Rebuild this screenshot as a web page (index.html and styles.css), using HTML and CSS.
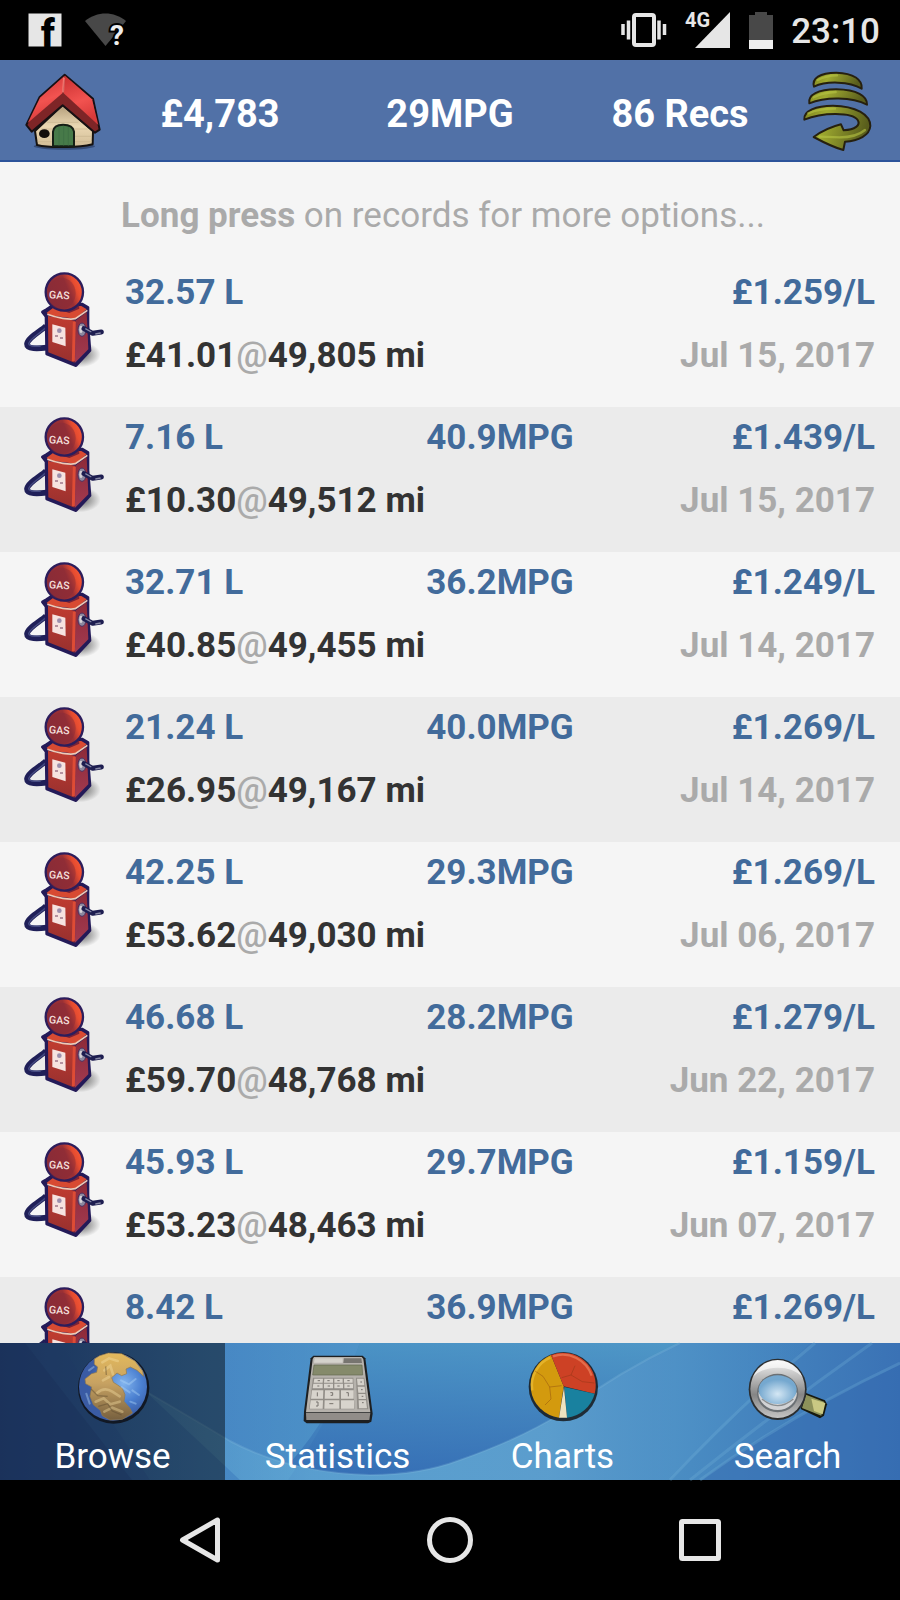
FILE: index.html
```
<!DOCTYPE html>
<html lang="en">
<head>
    <meta charset="UTF-8">
    <meta name="viewport" content="width=device-width, initial-scale=1.0">
    <title>Fuel Records</title>
    <link rel="stylesheet" href="styles.css">
</head>
<body>

    <!-- Shared pump icon -->
    <svg class="defs" width="0" height="0" aria-hidden="true">
        <defs>
            <linearGradient id="pump-face" x1="0" y1="0" x2="0" y2="1">
                <stop offset="0" stop-color="#c03c30"/>
                <stop offset="1" stop-color="#98302f"/>
            </linearGradient>
            <linearGradient id="pump-side" x1="0" y1="0" x2="0" y2="1">
                <stop offset="0" stop-color="#8d2a38"/>
                <stop offset="1" stop-color="#a33a50"/>
            </linearGradient>
            <linearGradient id="pump-globe" x1="0" y1="0.7" x2="1" y2="0.3">
                <stop offset="0" stop-color="#8a2c38"/>
                <stop offset="0.6" stop-color="#9a3035"/>
                <stop offset="0.8" stop-color="#e64c30"/>
                <stop offset="1" stop-color="#f65a38"/>
            </linearGradient>
            <radialGradient id="pump-shadow">
                <stop offset="0" stop-color="#222" stop-opacity="0.7"/>
                <stop offset="1" stop-color="#222" stop-opacity="0"/>
            </radialGradient>
        </defs>
        <symbol id="pump" viewBox="12 20 240 294">
            <ellipse cx="180" cy="268" rx="62" ry="38" fill="url(#pump-shadow)"/>
            <path d="M78 182 C62 198 24 216 21 236 C21 252 54 250 80 247" fill="none" stroke="#1f1f58" stroke-width="17" stroke-linejoin="round"/>
            <path d="M76 188 C60 204 30 220 26 234 C26 244 44 243 62 243" fill="none" stroke="#454b82" stroke-width="4"/>
            <path d="M67 140 L80 132 L98 120 L186 116 L204 126 L204 180 L210 256 L168 301 L80 266 L78 154Z" fill="#241a58" stroke="#241a58" stroke-width="8" stroke-linejoin="round"/>
            <path d="M80 142 L104 124 L184 122 L200 132 L166 160 L86 150Z" fill="#d84a32"/>
            <path d="M84 152 L166 166 L164 292 L85 261Z" fill="url(#pump-face)"/>
            <path d="M166 166 L200 140 L205 252 L165 292Z" fill="url(#pump-side)"/>
            <path d="M163 169 L160 288" stroke="#de4c35" stroke-width="9"/>
            <path d="M82 147 C110 158 150 164 166 160 L202 135" fill="none" stroke="#f0c9b4" stroke-width="5"/>
            <path d="M108 110 L176 110 L178 130 L148 143 L112 132Z" fill="#7b2335"/>
            <circle cx="133" cy="80" r="56" fill="url(#pump-globe)" stroke="#2c1d5c" stroke-width="7"/>
            <ellipse cx="124" cy="84" rx="43" ry="47" fill="#842a38" opacity="0.45"/>
            <text x="86" y="99" class="pump-sign" transform="rotate(3 86 99)">GAS</text>
            <path d="M97 177 L136 187 L137 243 L97 230Z" fill="#f6e3e0"/>
            <circle cx="118" cy="196" r="7" fill="#9c8fac"/>
            <path d="M105 212h9M120 218h9" stroke="#b492a0" stroke-width="6"/>
            <ellipse cx="186" cy="193" rx="12" ry="20" fill="#8d8aa0" stroke="#4a2f60" stroke-width="3"/>
            <ellipse cx="183" cy="192" rx="5" ry="11" fill="#d7d2d6"/>
            <path d="M192 190 L218 204 L244 200" fill="none" stroke="#1d1d50" stroke-width="15" stroke-linecap="round" stroke-linejoin="round"/>
            <path d="M196 190 L214 200M226 206 L242 203" stroke="#8688a5" stroke-width="4"/>
        </symbol>
    </svg>

    <!-- Status bar -->
    <div class="status-bar">
        <div class="status-group status-left">
            <svg width="34" height="34" viewBox="0 0 34 34" aria-hidden="true">
                <rect x="0.5" y="0.5" width="33" height="33" fill="#e6e6e6"/>
                <text x="13" y="34" class="fb-letter">f</text>
            </svg>
            <svg width="42" height="34" viewBox="0 0 42 34" aria-hidden="true">
                <path d="M0 8 C12 -2 29 -2 41 8 L20.500 33Z" fill="#484848"/>
                <text x="25" y="32" class="wifi-mark">?</text>
            </svg>
        </div>
        <div class="status-group status-right">
            <svg width="46" height="36" viewBox="0 0 46 36" aria-hidden="true">
                <rect x="13" y="3" width="20" height="30" rx="2" fill="none" stroke="#e6e6e6" stroke-width="4"/>
                <path d="M2 12v11M7.500 8.500v19M38 8.500v19M43.500 12v11" stroke="#e6e6e6" stroke-width="3.500"/>
            </svg>
            <svg width="46" height="36" viewBox="0 0 46 36" aria-hidden="true">
                <path d="M45 0V36H10Z" fill="#e6e6e6"/>
                <text x="0" y="15" class="signal-type">4G</text>
            </svg>
            <svg width="24" height="37" viewBox="0 0 24 37" aria-hidden="true">
                <path d="M0 3H6V0H18V3H24V28H0Z" fill="#484848"/>
                <path d="M0 28H24V37H0Z" fill="#eee"/>
            </svg>
            <span class="clock">23:10</span>
        </div>
    </div>

    <!-- Summary header -->
    <header class="summary">
        <button type="button" class="summary-button" aria-label="Home">
            <svg width="76" height="77" viewBox="74 214 228 231" aria-hidden="true">
                <defs>
                    <linearGradient id="roof" x1="0" y1="0" x2="0.300" y2="1">
                        <stop offset="0" stop-color="#c92f31"/>
                        <stop offset="0.600" stop-color="#f25350"/>
                        <stop offset="1" stop-color="#d83a3a"/>
                    </linearGradient>
                    <linearGradient id="wall" x1="0" y1="0" x2="0" y2="1">
                        <stop offset="0" stop-color="#b29c79"/>
                        <stop offset="0.500" stop-color="#ead7b2"/>
                        <stop offset="1" stop-color="#d2bd96"/>
                    </linearGradient>
                </defs>
                <ellipse cx="192" cy="434" rx="92" ry="10" fill="#1a2747" opacity="0.500"/>
                <path d="M187 310 L278 388 L277 428 Q240 437 190 436 Q140 437 110 430 L104 388Z" fill="url(#wall)" stroke="#171311" stroke-width="6" stroke-linejoin="round"/>
                <path d="M140 362H234M122 382H262M222 404H274M222 420H274M112 420H154" stroke="#c9b48e" stroke-width="2"/>
                <path d="M158 434 V390 Q160 369 188 369 Q218 369 221 390 V434Z" fill="#477a49" stroke="#161f16" stroke-width="6"/>
                <path d="M176 376V432M190 372V432M204 376V432" stroke="#3d6d42" stroke-width="2"/>
                <ellipse cx="132" cy="396" rx="16" ry="13" fill="#130e0c"/>
                <path d="M193 219 L278 291 L298 384 L284 393 L187 311 L94 390 L78 370 L118 286Z" fill="#7e2527" stroke="#171014" stroke-width="6" stroke-linejoin="round"/>
                <path d="M193 222 L119 288 L82 364 L186 275Z" fill="url(#roof)"/>
                <path d="M194 222 L275 293 L294 370 L190 275Z" fill="url(#roof)"/>
                <path d="M191 228 L188 272" stroke="#ff8880" stroke-width="6" opacity="0.700"/>
            </svg>
        </button>
        <div class="summary-stats">
            <span>£4,783</span>
            <span>29MPG</span>
            <span>86 Recs</span>
        </div>
        <button type="button" class="summary-button" aria-label="Sort records">
            <svg width="69" height="80" viewBox="1060 215 207 240" aria-hidden="true">
                <defs>
                    <linearGradient id="coil" x1="0" y1="0" x2="1" y2="0.200">
                        <stop offset="0" stop-color="#7f8420"/>
                        <stop offset="0.350" stop-color="#a0ab30"/>
                        <stop offset="1" stop-color="#595d1c"/>
                    </linearGradient>
                </defs>
                <g fill="url(#coil)" stroke="#26200f" stroke-width="6" stroke-linejoin="round">
                    <path d="M1093 262 C1086 238 1110 220 1160 220 C1212 221 1239 242 1236 268 C1200 246 1130 244 1093 262Z"/>
                    <path d="M1079 312 C1074 286 1106 270 1160 270 C1222 271 1253 290 1252 316 C1208 292 1126 292 1079 312Z"/>
                    <path d="M1064 361 C1060 334 1100 319 1150 319 C1218 320 1262 346 1262 380 C1260 408 1226 425 1186 427 L1181 452 C1150 444 1120 428 1092 413 C1118 394 1146 382 1174 375 L1182 393 C1216 391 1234 378 1224 362 C1208 338 1118 338 1064 361Z"/>
                </g>
                <path d="M1104 242 Q1130 228 1162 228M1092 294 Q1120 279 1158 278M1076 342 Q1110 327 1156 328M1110 412 L1170 414 Q1220 414 1246 392" fill="none" stroke="#b8c444" stroke-width="7" stroke-linecap="round" opacity="0.600"/>
            </svg>
        </button>
    </header>

    <!-- Records -->
    <main class="records">
        <p class="hint"><b>Long press</b> on records for more options...</p>
        <ul class="record-list">
            <li class="record">
                <svg class="record-icon" aria-hidden="true"><use href="#pump"/></svg>
                <div class="record-line fuel"><span>32.57 L</span><span></span><span>£1.259/L</span></div>
                <div class="record-line cost"><span>£41.01<i>@</i>49,805 mi</span><time>Jul 15, 2017</time></div>
            </li>
            <li class="record">
                <svg class="record-icon" aria-hidden="true"><use href="#pump"/></svg>
                <div class="record-line fuel"><span>7.16 L</span><span>40.9MPG</span><span>£1.439/L</span></div>
                <div class="record-line cost"><span>£10.30<i>@</i>49,512 mi</span><time>Jul 15, 2017</time></div>
            </li>
            <li class="record">
                <svg class="record-icon" aria-hidden="true"><use href="#pump"/></svg>
                <div class="record-line fuel"><span>32.71 L</span><span>36.2MPG</span><span>£1.249/L</span></div>
                <div class="record-line cost"><span>£40.85<i>@</i>49,455 mi</span><time>Jul 14, 2017</time></div>
            </li>
            <li class="record">
                <svg class="record-icon" aria-hidden="true"><use href="#pump"/></svg>
                <div class="record-line fuel"><span>21.24 L</span><span>40.0MPG</span><span>£1.269/L</span></div>
                <div class="record-line cost"><span>£26.95<i>@</i>49,167 mi</span><time>Jul 14, 2017</time></div>
            </li>
            <li class="record">
                <svg class="record-icon" aria-hidden="true"><use href="#pump"/></svg>
                <div class="record-line fuel"><span>42.25 L</span><span>29.3MPG</span><span>£1.269/L</span></div>
                <div class="record-line cost"><span>£53.62<i>@</i>49,030 mi</span><time>Jul 06, 2017</time></div>
            </li>
            <li class="record">
                <svg class="record-icon" aria-hidden="true"><use href="#pump"/></svg>
                <div class="record-line fuel"><span>46.68 L</span><span>28.2MPG</span><span>£1.279/L</span></div>
                <div class="record-line cost"><span>£59.70<i>@</i>48,768 mi</span><time>Jun 22, 2017</time></div>
            </li>
            <li class="record">
                <svg class="record-icon" aria-hidden="true"><use href="#pump"/></svg>
                <div class="record-line fuel"><span>45.93 L</span><span>29.7MPG</span><span>£1.159/L</span></div>
                <div class="record-line cost"><span>£53.23<i>@</i>48,463 mi</span><time>Jun 07, 2017</time></div>
            </li>
            <li class="record">
                <svg class="record-icon" aria-hidden="true"><use href="#pump"/></svg>
                <div class="record-line fuel"><span>8.42 L</span><span>36.9MPG</span><span>£1.269/L</span></div>
            </li>
        </ul>
    </main>

    <!-- Tabs -->
    <nav class="tabs">
        <svg class="tabs-background" viewBox="0 0 900 137" preserveAspectRatio="none" aria-hidden="true">
            <defs>
                <linearGradient id="sky" x1="0" y1="0" x2="1" y2="0">
                    <stop offset="0" stop-color="#3562ae"/>
                    <stop offset="0.230" stop-color="#3f7cbf"/>
                    <stop offset="0.400" stop-color="#3f80be"/>
                    <stop offset="0.750" stop-color="#4a8dc3"/>
                    <stop offset="1" stop-color="#3a72b5"/>
                </linearGradient>
                <linearGradient id="beam" x1="0" y1="0" x2="1" y2="0">
                    <stop offset="0" stop-color="#58a0cf" stop-opacity="0"/>
                    <stop offset="1" stop-color="#58a0cf" stop-opacity="0.600"/>
                </linearGradient>
                <linearGradient id="deep" x1="0" y1="1" x2="0" y2="0">
                    <stop offset="0" stop-color="#3268b2" stop-opacity="0.700"/>
                    <stop offset="1" stop-color="#509bc8" stop-opacity="0.700"/>
                </linearGradient>
                <linearGradient id="wave" gradientUnits="userSpaceOnUse" x1="140" y1="0" x2="820" y2="0">
                    <stop offset="0" stop-color="#5ea5d2" stop-opacity="0.300"/>
                    <stop offset="0.250" stop-color="#64abd6" stop-opacity="0.700"/>
                    <stop offset="0.600" stop-color="#5d9fce" stop-opacity="0.900"/>
                    <stop offset="1" stop-color="#4386c1" stop-opacity="0.300"/>
                </linearGradient>
            </defs>
            <rect width="900" height="137" fill="url(#sky)"/>
            <path d="M0 0H25L132 137H0Z" fill="#2b4f98" opacity="0.300"/>
            <path d="M60 0H360Q334 70 288 137H150Z" fill="url(#beam)"/>
            <path d="M360 0Q334 70 290 120Q320 132 370 132Q420 132 460 117Q520 96 562 70Q620 28 680 0Z" fill="url(#deep)"/>
            <path d="M145 48Q200 80 230 98Q290 130 370 132Q420 132 460 117Q520 96 562 70Q620 28 680 0H810L670 137H240Z" fill="url(#wave)"/>
            <path d="M145 48Q200 80 230 98Q290 130 370 132Q420 132 460 117Q520 96 562 70Q620 28 680 0" fill="none" stroke="#86c0df" stroke-width="2" opacity="0.250"/>
            <path d="M900 22Q780 76 702 137H900Z" fill="#3468b0" opacity="0.450"/>
            <path d="M815 0Q740 62 670 137M872 0Q780 65 690 137M900 20Q790 72 700 137" fill="none" stroke="#71afd7" stroke-width="3" opacity="0.300"/>
        </svg>
        <a href="#browse" class="tab active">
            <svg width="76" height="76" viewBox="10 8 228 228" aria-hidden="true">
                <defs>
                    <radialGradient id="globe-sea" cx="0.650" cy="0.450">
                        <stop offset="0" stop-color="#82b4ee"/>
                        <stop offset="0.550" stop-color="#4a7fd0"/>
                        <stop offset="1" stop-color="#3a5ba4"/>
                    </radialGradient>
                    <linearGradient id="globe-land" x1="0" y1="0" x2="0" y2="1">
                        <stop offset="0" stop-color="#e3b95c"/>
                        <stop offset="0.450" stop-color="#c7a262"/>
                        <stop offset="1" stop-color="#77603f"/>
                    </linearGradient>
                </defs>
                <circle cx="126" cy="125" r="107" fill="#111824"/>
                <circle cx="124" cy="121" r="102" fill="url(#globe-sea)"/>
                <path d="M68 38 L84 28 L110 20 L150 22 L190 44 L213 74 L216 90 L196 72 L176 62 L163 68 L165 82 L150 88 L136 80 L120 94 L125 108 L138 116 L152 126 L160 145 L157 165 L175 186 L182 200 L152 219 L115 221 L92 208 L86 192 L65 175 L55 150 L60 122 L42 112 L40 98 L60 82 L75 78 L78 62 L68 54Z" fill="url(#globe-land)" stroke="#94794a" stroke-width="2" stroke-linejoin="round"/>
                <path d="M92 48 L112 36 L138 44M98 72 L116 58 L124 84M94 102 L112 92M76 140 Q98 120 122 136 L144 150M72 166 L96 156 L116 174 L144 166M98 196 L122 184 L152 196" fill="none" stroke="#f5dfa2" stroke-width="8" stroke-linecap="round" opacity="0.400"/>
                <path d="M58 128 L78 148 L108 150M80 180 L108 172 L122 194 L150 206M102 60 L104 86" fill="none" stroke="#5c492e" stroke-width="4" opacity="0.450"/>
                <path d="M148 102 L172 114 L192 98M150 122 L174 138M182 132 L202 146M176 166 L192 172M44 142 L54 172M52 72 L66 62" fill="none" stroke="#b1d6f8" stroke-width="6" stroke-linecap="round" opacity="0.400"/>
            </svg>
            <span>Browse</span>
        </a>
        <a href="#statistics" class="tab">
            <svg width="76" height="76" viewBox="898 56 228 228" aria-hidden="true">
                <path d="M938 76H1086L1094 84L1116 250L1112 274L1102 279H918L909 272L910 244L930 84Z" fill="#1d1f21"/>
                <path d="M940 80H1083L1088 86L1109 246H916L936 86Z" fill="#b6b2ac"/>
                <path d="M916 248H1109L1106 269H917Z" fill="#918d89"/>
                <path d="M942 84H1026V97H940Z" fill="#d4d2cc"/>
                <path d="M1030 84H1082L1084 98H1028Z" fill="#777570"/>
                <path d="M940 104H1084L1086 134H936Z" fill="#858a6b" stroke="#62664f" stroke-width="2"/>
                <path d="M937 142H1058L1061 237H925Z" fill="#918d87"/>
                <g fill="#d8d4cd">
                    <path d="M941 145h26l-1 12h-27zM971 145h26v12h-27zM1001 145h25v12h-25zM1030 145h26v12h-26z"/>
                    <path d="M938 160h28v14h-30zM970 160h27v14h-27zM1001 160h26v14h-26zM1031 160h26v14h-26z"/>
                    <path d="M934 180h34l-1 25h-36zM973 180h43v25h-44zM1021 180h38v25h-38z"/>
                    <path d="M930 210h37l-1 25h-39zM972 210h44v25h-45zM1021 210h39v25h-39z"/>
                </g>
                <path d="M1066 142H1091L1103 237H1070Z" fill="#918d87"/>
                <path d="M1069 145h20l2 20h-20zM1071 169h21l2 18h-21zM1073 191h21l2 15h-22zM1074 210h22l3 24h-24z" fill="#d5d1ca"/>
                <path d="M950 186v12M989 187h7v8h-6M1037 187h6v11M946 215h6v12h-6M986 220h12M951 151h7M980 151h7M1010 151h7M1040 151h7M950 167h6M981 167h7M1010 167h7M1040 167h7M1079 155h5M1081 178h5M1083 198h5M1084 217h5" fill="none" stroke="#77736e" stroke-width="3"/>
            </svg>
            <span>Statistics</span>
        </a>
        <a href="#charts" class="tab">
            <svg width="76" height="76" viewBox="224 56 228 228" aria-hidden="true">
                <circle cx="339" cy="169" r="104" fill="#16191c" opacity="0.850"/>
                <path d="M340 168 L302 74 A98 98 0 0 0 326 262Z" fill="#d39a0e"/>
                <path d="M340 168 L302 74 A98 98 0 0 1 433 190Z" fill="#cd4125"/>
                <path d="M342 170 L433 190 A98 98 0 0 1 350 262Z" fill="#19819f"/>
                <path d="M341 170 L350 262 H326Z" fill="#eee2c0"/>
                <path d="M246 180 A91 91 0 0 1 300 82" fill="none" stroke="#f0c33e" stroke-width="7" opacity="0.600"/>
                <path d="M308 78 A92 92 0 0 1 424 136" fill="none" stroke="#f18a66" stroke-width="7" opacity="0.600"/>
                <path d="M254 122 L278 138 L298 170 L334 166M298 170 L302 206 L284 224M334 142 L362 134 L374 106M362 134 L396 154 L432 158" fill="none" stroke="#76310f" stroke-width="2" opacity="0.500"/>
            </svg>
            <span>Charts</span>
        </a>
        <a href="#search" class="tab">
            <svg width="80" height="76" viewBox="890 56 240 228" aria-hidden="true">
                <defs>
                    <linearGradient id="ring" x1="0" y1="0" x2="0" y2="1">
                        <stop offset="0" stop-color="#f5f5f5"/>
                        <stop offset="0.300" stop-color="#bcbcbc"/>
                        <stop offset="0.600" stop-color="#858585"/>
                        <stop offset="1" stop-color="#c4c4c4"/>
                    </linearGradient>
                    <radialGradient id="lens" cy="0.650">
                        <stop offset="0" stop-color="#d4e7f4"/>
                        <stop offset="1" stop-color="#75a8cf"/>
                    </radialGradient>
                </defs>
                <path d="M1062 187 L1121 210 L1127 222 L1118 256 L1106 264 L1048 236Z" fill="#17190f"/>
                <path d="M1064 193 L1118 214 L1110 256 L1052 233Z" fill="#8d925a"/>
                <path d="M1080 205 L1122 218 L1114 252 L1088 242Z" fill="#cac983"/>
                <ellipse cx="979" cy="177" rx="87" ry="92" fill="#2b2e30"/>
                <ellipse cx="979" cy="176" rx="82" ry="87" fill="url(#ring)"/>
                <path d="M904 140 Q930 92 979 91 Q1030 92 1054 140 Q1026 112 979 112 Q932 112 904 140Z" fill="#fff" opacity="0.600"/>
                <ellipse cx="979" cy="188" rx="62" ry="58" fill="#6b7074"/>
                <path d="M921 185 A58 54 0 0 0 1037 185 Q1018 214 979 214 Q940 214 921 185Z" fill="#d2d3d5"/>
                <ellipse cx="979" cy="178" rx="57" ry="43" fill="url(#lens)"/>
                <path d="M932 206Q979 246 1026 206" fill="none" stroke="#898e91" stroke-width="4"/>
            </svg>
            <span>Search</span>
        </a>
    </nav>

    <!-- System navigation -->
    <div class="system-nav">
        <button type="button" aria-label="Back">
            <svg width="48" height="48" viewBox="0 0 48 48" aria-hidden="true"><path d="M41.500 4V44L6.500 24Z"/></svg>
        </button>
        <button type="button" aria-label="Home screen">
            <svg width="48" height="48" viewBox="0 0 48 48" aria-hidden="true"><circle cx="24" cy="24" r="20.500"/></svg>
        </button>
        <button type="button" aria-label="Recent apps">
            <svg width="48" height="48" viewBox="0 0 48 48" aria-hidden="true"><rect x="5.500" y="5.500" width="37" height="37" rx="1"/></svg>
        </button>
    </div>

</body>
</html>
```
FILE: styles.css
```
* {
    box-sizing: border-box;
}

body {
    font-family: Roboto, "Liberation Sans", sans-serif;
    font-size: 35px;
    line-height: 42px;
    background-color: #f5f5f5;
    margin: 0;
    display: flex;
    flex-direction: column;
    height: 100vh;
}

svg {
    display: block;
    flex-shrink: 0;
    overflow: visible;
}

button {
    display: flex;
    align-items: center;
    justify-content: center;
    padding: 0;
    background: none;
    border: none;
    cursor: pointer;
}

.defs {
    position: absolute;
}

/* Status bar */
.status-bar {
    display: flex;
    justify-content: space-between;
    flex-shrink: 0;
    height: 60px;
    padding: 0 20px 0 28px;
    background-color: black;
    color: #e6e6e6;
}

.status-group {
    display: flex;
    align-items: center;
}

.status-left {
    gap: 23px;
}

.status-right {
    gap: 18px;
}

.clock {
    padding-top: 3px;
    font-weight: 500;
}

.fb-letter {
    font-size: 38px;
    font-weight: 900;
    fill: black;
}

.wifi-mark {
    font-size: 28px;
    font-weight: 700;
    fill: #eee;
    stroke: black;
    stroke-width: 4px;
    paint-order: stroke;
}

.signal-type {
    font-size: 20px;
    font-weight: 700;
    fill: #e6e6e6;
}

/* Summary header */
.summary {
    display: flex;
    flex-shrink: 0;
    height: 102px;
    padding: 2px 20px 0;
    background-color: #5171a7;
    border-bottom: 2px solid #2c539a;
    color: white;
}

.summary-button {
    width: 85px;
}

.summary-stats {
    display: flex;
    flex: 1;
    align-items: center;
    padding-top: 5px;
    font-size: 38px;
    font-weight: 700;
    text-align: center;
}

.summary-stats span {
    flex: 1;
}

/* Records */
.records {
    flex: 1;
    min-height: 0;
    overflow: hidden;
}

.hint {
    margin: 0;
    padding: 33px 34px 25px 20px;
    color: #aaa;
    text-align: center;
}

.record-list {
    list-style: none;
    margin: 0;
    padding: 0;
}

.record {
    display: grid;
    grid-template-columns: 80px 1fr;
    column-gap: 21px;
    row-gap: 21px;
    min-height: 145px;
    padding: 10px 25px 30px 24px;
    font-weight: 700;
}

.record:nth-child(even) {
    background-color: #ebebeb;
}

.record-icon {
    grid-row: 1 / span 2;
    width: 80px;
    height: 98px;
}

.record-line {
    display: grid;
}

.fuel {
    grid-template-columns: 1fr auto 1fr;
    color: #426b9b;
}

.fuel span:last-child {
    text-align: right;
}

.cost {
    grid-template-columns: 1fr auto;
    color: #333;
}

.cost i {
    color: #aaa;
    font-style: normal;
    font-weight: 500;
}

.cost time {
    color: #aaa;
}

.pump-sign {
    font-size: 32px;
    font-weight: 500;
    fill: #f4dfdc;
}

/* Tabs */
.tabs {
    position: relative;
    display: flex;
    flex-shrink: 0;
    height: 137px;
}

.tabs-background {
    position: absolute;
    inset: 0;
    width: 100%;
    height: 100%;
}

.tab {
    position: relative;
    display: flex;
    flex: 1;
    flex-direction: column;
    align-items: center;
    gap: 14px;
    padding-top: 6px;
    color: white;
    line-height: 36px;
    text-decoration: none;
}

.tab.active {
    background-color: rgba(0, 0, 0, 0.45);
}

/* System navigation */
.system-nav {
    display: flex;
    flex-shrink: 0;
    height: 120px;
    padding: 0 75px;
    background-color: black;
}

.system-nav button {
    flex: 1;
}

.system-nav svg {
    fill: none;
    stroke: #e6e6e6;
    stroke-width: 5px;
    stroke-linejoin: round;
}
```
